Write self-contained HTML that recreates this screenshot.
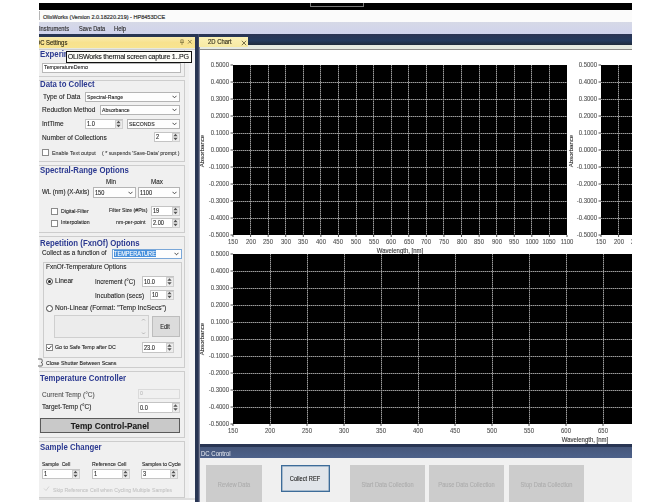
<!DOCTYPE html><html><head><meta charset="utf-8"><style>
html,body{margin:0;padding:0;background:#fff;width:671px;height:503px;overflow:hidden;position:relative;font-family:"Liberation Sans",sans-serif;}
#w div{position:absolute;box-sizing:content-box;}
.t{white-space:pre;-webkit-text-stroke-width:0.1px;}
</style></head><body><div id="w" style="position:absolute;left:0;top:0;width:671px;height:503px;overflow:hidden;filter:blur(0.3px)">
<div style="left:39px;top:3px;width:593px;height:7px;background:#000"></div>
<div style="left:310px;top:3px;width:52px;height:3px;border:1px solid #7a7a7a;border-top:none;"></div>
<div style="left:39px;top:10px;width:593px;height:12px;background:#fbfbfb"></div>
<div style="left:39px;top:11px;width:1px;height:9px;background:#b5b5b5"></div>
<div class="t" style="left:42.8px;top:12.98px;font-size:6.19px;line-height:7.43px;color:#333;font-weight:normal;transform:scaleX(0.8929);transform-origin:0 50%;-webkit-text-stroke:0.2px #333">OlisWorks (Version 2.0.18220.219) - HP8453DCE</div>
<div style="left:39px;top:22px;width:593px;height:12px;background:linear-gradient(#d6d9e6,#d0d3ec)"></div>
<div class="t" style="left:39.3px;top:24.74px;font-size:6.44px;line-height:7.73px;color:#2e2e2e;font-weight:normal;transform:scaleX(0.8929);transform-origin:0 50%;-webkit-text-stroke:0.15px #2e2e2e">Instruments</div>
<div class="t" style="left:79px;top:24.84px;font-size:6.27px;line-height:7.53px;color:#2e2e2e;font-weight:normal;transform:scaleX(0.8929);transform-origin:0 50%;-webkit-text-stroke:0.15px #2e2e2e">Save Data</div>
<div class="t" style="left:113.5px;top:24.70px;font-size:6.50px;line-height:7.80px;color:#2e2e2e;font-weight:normal;transform:scaleX(0.8929);transform-origin:0 50%;-webkit-text-stroke:0.15px #2e2e2e">Help</div>
<div style="left:39px;top:34px;width:593px;height:469px;background:#283553"></div>
<div style="left:199px;top:34px;width:433px;height:11px;background:linear-gradient(#2b3453,#243a5e 60%,#1f2b3c)"></div>
<div style="left:39px;top:37px;width:156px;height:11px;background:linear-gradient(#f9ebb0,#f8e28e 50%,#f8e48f)"></div>
<div style="left:39px;top:37px;width:130px;height:11px;overflow:hidden"><div class="t" style="position:absolute;left:-3.3px;top:2.1px;font-size:6.6px;line-height:8px;color:#2e2a18;-webkit-text-stroke:0.15px #2e2a18;transform:scaleX(0.89);transform-origin:0 50%">DC Settings</div></div>
<svg style="position:absolute;left:179px;top:39px" width="6" height="7"><path d="M1.8 0.8 H4.2 V3.3 H1.8 Z M1 3.5 H5 M3 3.5 V6" fill="none" stroke="#8c8048" stroke-width="0.8"/></svg>
<svg style="position:absolute;left:187px;top:39.2px" width="6" height="6"><path d="M1 1 L4.6 4.6 M4.6 1 L1 4.6" fill="none" stroke="#8c8048" stroke-width="0.9"/></svg>
<div style="left:39px;top:48px;width:156px;height:1px;background:#e6e8e0"></div>
<div style="left:39px;top:49px;width:156px;height:1px;background:#cfcfcf"></div>
<div style="left:39px;top:50px;width:156px;height:450px;background:#f0f0f0"></div>
<div style="left:189px;top:50px;width:6px;height:450px;background:#f5f5f7"></div>
<div style="left:39px;top:500px;width:156px;height:3px;background:#fff"></div>
<div style="left:198px;top:34px;width:1px;height:469px;background:#3f4866"></div>
<div style="left:199px;top:45px;width:1px;height:458px;background:#7d8399"></div>
<div style="left:200px;top:45px;width:432px;height:4px;background:#e6eae2"></div>
<div style="left:199px;top:37px;width:49px;height:10px;background:linear-gradient(#fbf1b8,#f6e9a2)"></div>
<div class="t" style="left:208px;top:38.44px;font-size:6.61px;line-height:7.93px;color:#2e2a18;font-weight:normal;transform:scaleX(0.8929);transform-origin:0 50%;-webkit-text-stroke:0.15px #3a3520">2D Chart</div>
<svg style="position:absolute;left:240.5px;top:39.8px" width="6" height="6"><path d="M0.8 0.8 L5.2 5.2 M5.2 0.8 L0.8 5.2" fill="none" stroke="#6b6440" stroke-width="0.9"/></svg>
<div style="left:200px;top:49px;width:432px;height:1px;background:#8c8c8a"></div>
<div style="left:200px;top:50px;width:432px;height:394px;background:#fff"></div>
<div style="left:200px;top:447px;width:432px;height:11px;background:linear-gradient(#46577a,#4d618a)"></div>
<div class="t" style="left:200.8px;top:450.17px;font-size:6.72px;line-height:8.06px;color:#eceef4;font-weight:normal;transform:scaleX(0.8929);transform-origin:0 50%;-webkit-text-stroke-width:0">DC Control</div>
<div style="left:200px;top:458px;width:432px;height:44px;background:#f0f0f0"></div>
<div style="left:195px;top:502px;width:437px;height:1px;background:#fff"></div>
<div style="left:632px;top:3px;width:39px;height:500px;background:#fff"></div>
<div class="t" style="left:128.8px;width:100px;text-align:right;top:60.68px;font-size:7.20px;line-height:8.64px;color:#505050;font-weight:normal;transform:scaleX(0.8333);transform-origin:100% 50%;">0.5000</div>
<div class="t" style="left:128.8px;width:100px;text-align:right;top:77.68px;font-size:7.20px;line-height:8.64px;color:#505050;font-weight:normal;transform:scaleX(0.8333);transform-origin:100% 50%;">0.4000</div>
<div class="t" style="left:128.8px;width:100px;text-align:right;top:94.68px;font-size:7.20px;line-height:8.64px;color:#505050;font-weight:normal;transform:scaleX(0.8333);transform-origin:100% 50%;">0.3000</div>
<div class="t" style="left:128.8px;width:100px;text-align:right;top:111.68px;font-size:7.20px;line-height:8.64px;color:#505050;font-weight:normal;transform:scaleX(0.8333);transform-origin:100% 50%;">0.2000</div>
<div class="t" style="left:128.8px;width:100px;text-align:right;top:128.68px;font-size:7.20px;line-height:8.64px;color:#505050;font-weight:normal;transform:scaleX(0.8333);transform-origin:100% 50%;">0.1000</div>
<div class="t" style="left:128.8px;width:100px;text-align:right;top:145.68px;font-size:7.20px;line-height:8.64px;color:#505050;font-weight:normal;transform:scaleX(0.8333);transform-origin:100% 50%;">0.0000</div>
<div class="t" style="left:128.8px;width:100px;text-align:right;top:162.68px;font-size:7.20px;line-height:8.64px;color:#505050;font-weight:normal;transform:scaleX(0.8333);transform-origin:100% 50%;">-0.1000</div>
<div class="t" style="left:128.8px;width:100px;text-align:right;top:179.68px;font-size:7.20px;line-height:8.64px;color:#505050;font-weight:normal;transform:scaleX(0.8333);transform-origin:100% 50%;">-0.2000</div>
<div class="t" style="left:128.8px;width:100px;text-align:right;top:196.68px;font-size:7.20px;line-height:8.64px;color:#505050;font-weight:normal;transform:scaleX(0.8333);transform-origin:100% 50%;">-0.3000</div>
<div class="t" style="left:128.8px;width:100px;text-align:right;top:213.68px;font-size:7.20px;line-height:8.64px;color:#505050;font-weight:normal;transform:scaleX(0.8333);transform-origin:100% 50%;">-0.4000</div>
<div class="t" style="left:128.8px;width:100px;text-align:right;top:230.68px;font-size:7.20px;line-height:8.64px;color:#505050;font-weight:normal;transform:scaleX(0.8333);transform-origin:100% 50%;">-0.5000</div>
<div class="t" style="left:218.0px;width:30px;text-align:center;top:237.75px;font-size:7.08px;line-height:8.50px;color:#505050;font-weight:normal;transform:scaleX(0.8333);transform-origin:50% 50%;">150</div>
<div class="t" style="left:235.57894736842104px;width:30px;text-align:center;top:237.75px;font-size:7.08px;line-height:8.50px;color:#505050;font-weight:normal;transform:scaleX(0.8333);transform-origin:50% 50%;">200</div>
<div class="t" style="left:253.15789473684208px;width:30px;text-align:center;top:237.75px;font-size:7.08px;line-height:8.50px;color:#505050;font-weight:normal;transform:scaleX(0.8333);transform-origin:50% 50%;">250</div>
<div class="t" style="left:270.7368421052631px;width:30px;text-align:center;top:237.75px;font-size:7.08px;line-height:8.50px;color:#505050;font-weight:normal;transform:scaleX(0.8333);transform-origin:50% 50%;">300</div>
<div class="t" style="left:288.3157894736842px;width:30px;text-align:center;top:237.75px;font-size:7.08px;line-height:8.50px;color:#505050;font-weight:normal;transform:scaleX(0.8333);transform-origin:50% 50%;">350</div>
<div class="t" style="left:305.89473684210526px;width:30px;text-align:center;top:237.75px;font-size:7.08px;line-height:8.50px;color:#505050;font-weight:normal;transform:scaleX(0.8333);transform-origin:50% 50%;">400</div>
<div class="t" style="left:323.4736842105263px;width:30px;text-align:center;top:237.75px;font-size:7.08px;line-height:8.50px;color:#505050;font-weight:normal;transform:scaleX(0.8333);transform-origin:50% 50%;">450</div>
<div class="t" style="left:341.05263157894734px;width:30px;text-align:center;top:237.75px;font-size:7.08px;line-height:8.50px;color:#505050;font-weight:normal;transform:scaleX(0.8333);transform-origin:50% 50%;">500</div>
<div class="t" style="left:358.63157894736844px;width:30px;text-align:center;top:237.75px;font-size:7.08px;line-height:8.50px;color:#505050;font-weight:normal;transform:scaleX(0.8333);transform-origin:50% 50%;">550</div>
<div class="t" style="left:376.2105263157895px;width:30px;text-align:center;top:237.75px;font-size:7.08px;line-height:8.50px;color:#505050;font-weight:normal;transform:scaleX(0.8333);transform-origin:50% 50%;">600</div>
<div class="t" style="left:393.7894736842105px;width:30px;text-align:center;top:237.75px;font-size:7.08px;line-height:8.50px;color:#505050;font-weight:normal;transform:scaleX(0.8333);transform-origin:50% 50%;">650</div>
<div class="t" style="left:411.36842105263156px;width:30px;text-align:center;top:237.75px;font-size:7.08px;line-height:8.50px;color:#505050;font-weight:normal;transform:scaleX(0.8333);transform-origin:50% 50%;">700</div>
<div class="t" style="left:428.9473684210526px;width:30px;text-align:center;top:237.75px;font-size:7.08px;line-height:8.50px;color:#505050;font-weight:normal;transform:scaleX(0.8333);transform-origin:50% 50%;">750</div>
<div class="t" style="left:446.52631578947364px;width:30px;text-align:center;top:237.75px;font-size:7.08px;line-height:8.50px;color:#505050;font-weight:normal;transform:scaleX(0.8333);transform-origin:50% 50%;">800</div>
<div class="t" style="left:464.1052631578947px;width:30px;text-align:center;top:237.75px;font-size:7.08px;line-height:8.50px;color:#505050;font-weight:normal;transform:scaleX(0.8333);transform-origin:50% 50%;">850</div>
<div class="t" style="left:481.6842105263158px;width:30px;text-align:center;top:237.75px;font-size:7.08px;line-height:8.50px;color:#505050;font-weight:normal;transform:scaleX(0.8333);transform-origin:50% 50%;">900</div>
<div class="t" style="left:499.2631578947369px;width:30px;text-align:center;top:237.75px;font-size:7.08px;line-height:8.50px;color:#505050;font-weight:normal;transform:scaleX(0.8333);transform-origin:50% 50%;">950</div>
<div class="t" style="left:516.8421052631579px;width:30px;text-align:center;top:237.75px;font-size:7.08px;line-height:8.50px;color:#505050;font-weight:normal;transform:scaleX(0.8333);transform-origin:50% 50%;">1000</div>
<div class="t" style="left:534.421052631579px;width:30px;text-align:center;top:237.75px;font-size:7.08px;line-height:8.50px;color:#505050;font-weight:normal;transform:scaleX(0.8333);transform-origin:50% 50%;">1050</div>
<div class="t" style="left:552.0px;width:30px;text-align:center;top:237.75px;font-size:7.08px;line-height:8.50px;color:#505050;font-weight:normal;transform:scaleX(0.8333);transform-origin:50% 50%;">1100</div>
<div class="t" style="left:360.0px;width:80px;text-align:center;top:247.27px;font-size:6.72px;line-height:8.06px;color:#333;font-weight:normal;transform:scaleX(0.8929);transform-origin:50% 50%;">Wavelength, [nm]</div>
<div class="t" style="left:496.79999999999995px;width:100px;text-align:right;top:60.68px;font-size:7.20px;line-height:8.64px;color:#505050;font-weight:normal;transform:scaleX(0.8333);transform-origin:100% 50%;">0.5000</div>
<div class="t" style="left:496.79999999999995px;width:100px;text-align:right;top:77.68px;font-size:7.20px;line-height:8.64px;color:#505050;font-weight:normal;transform:scaleX(0.8333);transform-origin:100% 50%;">0.4000</div>
<div class="t" style="left:496.79999999999995px;width:100px;text-align:right;top:94.68px;font-size:7.20px;line-height:8.64px;color:#505050;font-weight:normal;transform:scaleX(0.8333);transform-origin:100% 50%;">0.3000</div>
<div class="t" style="left:496.79999999999995px;width:100px;text-align:right;top:111.68px;font-size:7.20px;line-height:8.64px;color:#505050;font-weight:normal;transform:scaleX(0.8333);transform-origin:100% 50%;">0.2000</div>
<div class="t" style="left:496.79999999999995px;width:100px;text-align:right;top:128.68px;font-size:7.20px;line-height:8.64px;color:#505050;font-weight:normal;transform:scaleX(0.8333);transform-origin:100% 50%;">0.1000</div>
<div class="t" style="left:496.79999999999995px;width:100px;text-align:right;top:145.68px;font-size:7.20px;line-height:8.64px;color:#505050;font-weight:normal;transform:scaleX(0.8333);transform-origin:100% 50%;">0.0000</div>
<div class="t" style="left:496.79999999999995px;width:100px;text-align:right;top:162.68px;font-size:7.20px;line-height:8.64px;color:#505050;font-weight:normal;transform:scaleX(0.8333);transform-origin:100% 50%;">-0.1000</div>
<div class="t" style="left:496.79999999999995px;width:100px;text-align:right;top:179.68px;font-size:7.20px;line-height:8.64px;color:#505050;font-weight:normal;transform:scaleX(0.8333);transform-origin:100% 50%;">-0.2000</div>
<div class="t" style="left:496.79999999999995px;width:100px;text-align:right;top:196.68px;font-size:7.20px;line-height:8.64px;color:#505050;font-weight:normal;transform:scaleX(0.8333);transform-origin:100% 50%;">-0.3000</div>
<div class="t" style="left:496.79999999999995px;width:100px;text-align:right;top:213.68px;font-size:7.20px;line-height:8.64px;color:#505050;font-weight:normal;transform:scaleX(0.8333);transform-origin:100% 50%;">-0.4000</div>
<div class="t" style="left:496.79999999999995px;width:100px;text-align:right;top:230.68px;font-size:7.20px;line-height:8.64px;color:#505050;font-weight:normal;transform:scaleX(0.8333);transform-origin:100% 50%;">-0.5000</div>
<div class="t" style="left:586.0px;width:30px;text-align:center;top:237.75px;font-size:7.08px;line-height:8.50px;color:#505050;font-weight:normal;transform:scaleX(0.8333);transform-origin:50% 50%;">150</div>
<div class="t" style="left:603.578947368421px;width:30px;text-align:center;top:237.75px;font-size:7.08px;line-height:8.50px;color:#505050;font-weight:normal;transform:scaleX(0.8333);transform-origin:50% 50%;">200</div>
<div class="t" style="left:621.1578947368421px;width:30px;text-align:center;top:237.75px;font-size:7.08px;line-height:8.50px;color:#505050;font-weight:normal;transform:scaleX(0.8333);transform-origin:50% 50%;">250</div>
<div class="t" style="left:128.8px;width:100px;text-align:right;top:249.68px;font-size:7.20px;line-height:8.64px;color:#505050;font-weight:normal;transform:scaleX(0.8333);transform-origin:100% 50%;">0.5000</div>
<div class="t" style="left:128.8px;width:100px;text-align:right;top:266.68px;font-size:7.20px;line-height:8.64px;color:#505050;font-weight:normal;transform:scaleX(0.8333);transform-origin:100% 50%;">0.4000</div>
<div class="t" style="left:128.8px;width:100px;text-align:right;top:283.68px;font-size:7.20px;line-height:8.64px;color:#505050;font-weight:normal;transform:scaleX(0.8333);transform-origin:100% 50%;">0.3000</div>
<div class="t" style="left:128.8px;width:100px;text-align:right;top:300.68px;font-size:7.20px;line-height:8.64px;color:#505050;font-weight:normal;transform:scaleX(0.8333);transform-origin:100% 50%;">0.2000</div>
<div class="t" style="left:128.8px;width:100px;text-align:right;top:317.68px;font-size:7.20px;line-height:8.64px;color:#505050;font-weight:normal;transform:scaleX(0.8333);transform-origin:100% 50%;">0.1000</div>
<div class="t" style="left:128.8px;width:100px;text-align:right;top:334.68px;font-size:7.20px;line-height:8.64px;color:#505050;font-weight:normal;transform:scaleX(0.8333);transform-origin:100% 50%;">0.0000</div>
<div class="t" style="left:128.8px;width:100px;text-align:right;top:351.68px;font-size:7.20px;line-height:8.64px;color:#505050;font-weight:normal;transform:scaleX(0.8333);transform-origin:100% 50%;">-0.1000</div>
<div class="t" style="left:128.8px;width:100px;text-align:right;top:368.68px;font-size:7.20px;line-height:8.64px;color:#505050;font-weight:normal;transform:scaleX(0.8333);transform-origin:100% 50%;">-0.2000</div>
<div class="t" style="left:128.8px;width:100px;text-align:right;top:385.68px;font-size:7.20px;line-height:8.64px;color:#505050;font-weight:normal;transform:scaleX(0.8333);transform-origin:100% 50%;">-0.3000</div>
<div class="t" style="left:128.8px;width:100px;text-align:right;top:402.68px;font-size:7.20px;line-height:8.64px;color:#505050;font-weight:normal;transform:scaleX(0.8333);transform-origin:100% 50%;">-0.4000</div>
<div class="t" style="left:128.8px;width:100px;text-align:right;top:419.68px;font-size:7.20px;line-height:8.64px;color:#505050;font-weight:normal;transform:scaleX(0.8333);transform-origin:100% 50%;">-0.5000</div>
<div class="t" style="left:218.0px;width:30px;text-align:center;top:426.75px;font-size:7.08px;line-height:8.50px;color:#505050;font-weight:normal;transform:scaleX(0.8333);transform-origin:50% 50%;">150</div>
<div class="t" style="left:255.0px;width:30px;text-align:center;top:426.75px;font-size:7.08px;line-height:8.50px;color:#505050;font-weight:normal;transform:scaleX(0.8333);transform-origin:50% 50%;">200</div>
<div class="t" style="left:292.0px;width:30px;text-align:center;top:426.75px;font-size:7.08px;line-height:8.50px;color:#505050;font-weight:normal;transform:scaleX(0.8333);transform-origin:50% 50%;">250</div>
<div class="t" style="left:329.0px;width:30px;text-align:center;top:426.75px;font-size:7.08px;line-height:8.50px;color:#505050;font-weight:normal;transform:scaleX(0.8333);transform-origin:50% 50%;">300</div>
<div class="t" style="left:366.0px;width:30px;text-align:center;top:426.75px;font-size:7.08px;line-height:8.50px;color:#505050;font-weight:normal;transform:scaleX(0.8333);transform-origin:50% 50%;">350</div>
<div class="t" style="left:403.0px;width:30px;text-align:center;top:426.75px;font-size:7.08px;line-height:8.50px;color:#505050;font-weight:normal;transform:scaleX(0.8333);transform-origin:50% 50%;">400</div>
<div class="t" style="left:440.0px;width:30px;text-align:center;top:426.75px;font-size:7.08px;line-height:8.50px;color:#505050;font-weight:normal;transform:scaleX(0.8333);transform-origin:50% 50%;">450</div>
<div class="t" style="left:477.0px;width:30px;text-align:center;top:426.75px;font-size:7.08px;line-height:8.50px;color:#505050;font-weight:normal;transform:scaleX(0.8333);transform-origin:50% 50%;">500</div>
<div class="t" style="left:514.0px;width:30px;text-align:center;top:426.75px;font-size:7.08px;line-height:8.50px;color:#505050;font-weight:normal;transform:scaleX(0.8333);transform-origin:50% 50%;">550</div>
<div class="t" style="left:551.0px;width:30px;text-align:center;top:426.75px;font-size:7.08px;line-height:8.50px;color:#505050;font-weight:normal;transform:scaleX(0.8333);transform-origin:50% 50%;">600</div>
<div class="t" style="left:588.0px;width:30px;text-align:center;top:426.75px;font-size:7.08px;line-height:8.50px;color:#505050;font-weight:normal;transform:scaleX(0.8333);transform-origin:50% 50%;">650</div>
<div class="t" style="left:625.0px;width:30px;text-align:center;top:426.75px;font-size:7.08px;line-height:8.50px;color:#505050;font-weight:normal;transform:scaleX(0.8333);transform-origin:50% 50%;">700</div>
<div class="t" style="left:544.6px;width:80px;text-align:center;top:435.77px;font-size:6.72px;line-height:8.06px;color:#333;font-weight:normal;transform:scaleX(0.8929);transform-origin:50% 50%;">Wavelength, [nm]</div>
<svg style="position:absolute;left:0;top:0" width="671" height="503"><defs><clipPath id="c"><rect x="199" y="50" width="433" height="394"/></clipPath></defs><g clip-path="url(#c)"><rect x="233" y="65" width="334" height="170" fill="#000"/><line x1="250.50" y1="65" x2="250.50" y2="235" stroke="#9c9c9c" stroke-width="1" stroke-dasharray="1.5 0.5"/><line x1="268.50" y1="65" x2="268.50" y2="235" stroke="#9c9c9c" stroke-width="1" stroke-dasharray="1.5 0.5"/><line x1="285.50" y1="65" x2="285.50" y2="235" stroke="#9c9c9c" stroke-width="1" stroke-dasharray="1.5 0.5"/><line x1="303.50" y1="65" x2="303.50" y2="235" stroke="#9c9c9c" stroke-width="1" stroke-dasharray="1.5 0.5"/><line x1="320.50" y1="65" x2="320.50" y2="235" stroke="#9c9c9c" stroke-width="1" stroke-dasharray="1.5 0.5"/><line x1="338.50" y1="65" x2="338.50" y2="235" stroke="#9c9c9c" stroke-width="1" stroke-dasharray="1.5 0.5"/><line x1="356.50" y1="65" x2="356.50" y2="235" stroke="#9c9c9c" stroke-width="1" stroke-dasharray="1.5 0.5"/><line x1="373.50" y1="65" x2="373.50" y2="235" stroke="#9c9c9c" stroke-width="1" stroke-dasharray="1.5 0.5"/><line x1="391.50" y1="65" x2="391.50" y2="235" stroke="#9c9c9c" stroke-width="1" stroke-dasharray="1.5 0.5"/><line x1="408.50" y1="65" x2="408.50" y2="235" stroke="#9c9c9c" stroke-width="1" stroke-dasharray="1.5 0.5"/><line x1="426.50" y1="65" x2="426.50" y2="235" stroke="#9c9c9c" stroke-width="1" stroke-dasharray="1.5 0.5"/><line x1="443.50" y1="65" x2="443.50" y2="235" stroke="#9c9c9c" stroke-width="1" stroke-dasharray="1.5 0.5"/><line x1="461.50" y1="65" x2="461.50" y2="235" stroke="#9c9c9c" stroke-width="1" stroke-dasharray="1.5 0.5"/><line x1="479.50" y1="65" x2="479.50" y2="235" stroke="#9c9c9c" stroke-width="1" stroke-dasharray="1.5 0.5"/><line x1="496.50" y1="65" x2="496.50" y2="235" stroke="#9c9c9c" stroke-width="1" stroke-dasharray="1.5 0.5"/><line x1="514.50" y1="65" x2="514.50" y2="235" stroke="#9c9c9c" stroke-width="1" stroke-dasharray="1.5 0.5"/><line x1="531.50" y1="65" x2="531.50" y2="235" stroke="#9c9c9c" stroke-width="1" stroke-dasharray="1.5 0.5"/><line x1="549.50" y1="65" x2="549.50" y2="235" stroke="#9c9c9c" stroke-width="1" stroke-dasharray="1.5 0.5"/><line x1="233" y1="82.50" x2="567" y2="82.50" stroke="#9c9c9c" stroke-width="1" stroke-dasharray="1.5 0.5"/><line x1="233" y1="99.50" x2="567" y2="99.50" stroke="#9c9c9c" stroke-width="1" stroke-dasharray="1.5 0.5"/><line x1="233" y1="116.50" x2="567" y2="116.50" stroke="#9c9c9c" stroke-width="1" stroke-dasharray="1.5 0.5"/><line x1="233" y1="133.50" x2="567" y2="133.50" stroke="#9c9c9c" stroke-width="1" stroke-dasharray="1.5 0.5"/><line x1="233" y1="150.50" x2="567" y2="150.50" stroke="#9c9c9c" stroke-width="1" stroke-dasharray="1.5 0.5"/><line x1="233" y1="167.50" x2="567" y2="167.50" stroke="#9c9c9c" stroke-width="1" stroke-dasharray="1.5 0.5"/><line x1="233" y1="184.50" x2="567" y2="184.50" stroke="#9c9c9c" stroke-width="1" stroke-dasharray="1.5 0.5"/><line x1="233" y1="201.50" x2="567" y2="201.50" stroke="#9c9c9c" stroke-width="1" stroke-dasharray="1.5 0.5"/><line x1="233" y1="218.50" x2="567" y2="218.50" stroke="#9c9c9c" stroke-width="1" stroke-dasharray="1.5 0.5"/><line x1="230.5" y1="65.00" x2="233" y2="65.00" stroke="#3a3a3a" stroke-width="0.9"/><line x1="230.5" y1="82.00" x2="233" y2="82.00" stroke="#3a3a3a" stroke-width="0.9"/><line x1="230.5" y1="99.00" x2="233" y2="99.00" stroke="#3a3a3a" stroke-width="0.9"/><line x1="230.5" y1="116.00" x2="233" y2="116.00" stroke="#3a3a3a" stroke-width="0.9"/><line x1="230.5" y1="133.00" x2="233" y2="133.00" stroke="#3a3a3a" stroke-width="0.9"/><line x1="230.5" y1="150.00" x2="233" y2="150.00" stroke="#3a3a3a" stroke-width="0.9"/><line x1="230.5" y1="167.00" x2="233" y2="167.00" stroke="#3a3a3a" stroke-width="0.9"/><line x1="230.5" y1="184.00" x2="233" y2="184.00" stroke="#3a3a3a" stroke-width="0.9"/><line x1="230.5" y1="201.00" x2="233" y2="201.00" stroke="#3a3a3a" stroke-width="0.9"/><line x1="230.5" y1="218.00" x2="233" y2="218.00" stroke="#3a3a3a" stroke-width="0.9"/><line x1="230.5" y1="235.00" x2="233" y2="235.00" stroke="#3a3a3a" stroke-width="0.9"/><line x1="233.00" y1="235" x2="233.00" y2="237" stroke="#3a3a3a" stroke-width="0.9"/><line x1="250.58" y1="235" x2="250.58" y2="237" stroke="#3a3a3a" stroke-width="0.9"/><line x1="268.16" y1="235" x2="268.16" y2="237" stroke="#3a3a3a" stroke-width="0.9"/><line x1="285.74" y1="235" x2="285.74" y2="237" stroke="#3a3a3a" stroke-width="0.9"/><line x1="303.32" y1="235" x2="303.32" y2="237" stroke="#3a3a3a" stroke-width="0.9"/><line x1="320.89" y1="235" x2="320.89" y2="237" stroke="#3a3a3a" stroke-width="0.9"/><line x1="338.47" y1="235" x2="338.47" y2="237" stroke="#3a3a3a" stroke-width="0.9"/><line x1="356.05" y1="235" x2="356.05" y2="237" stroke="#3a3a3a" stroke-width="0.9"/><line x1="373.63" y1="235" x2="373.63" y2="237" stroke="#3a3a3a" stroke-width="0.9"/><line x1="391.21" y1="235" x2="391.21" y2="237" stroke="#3a3a3a" stroke-width="0.9"/><line x1="408.79" y1="235" x2="408.79" y2="237" stroke="#3a3a3a" stroke-width="0.9"/><line x1="426.37" y1="235" x2="426.37" y2="237" stroke="#3a3a3a" stroke-width="0.9"/><line x1="443.95" y1="235" x2="443.95" y2="237" stroke="#3a3a3a" stroke-width="0.9"/><line x1="461.53" y1="235" x2="461.53" y2="237" stroke="#3a3a3a" stroke-width="0.9"/><line x1="479.11" y1="235" x2="479.11" y2="237" stroke="#3a3a3a" stroke-width="0.9"/><line x1="496.68" y1="235" x2="496.68" y2="237" stroke="#3a3a3a" stroke-width="0.9"/><line x1="514.26" y1="235" x2="514.26" y2="237" stroke="#3a3a3a" stroke-width="0.9"/><line x1="531.84" y1="235" x2="531.84" y2="237" stroke="#3a3a3a" stroke-width="0.9"/><line x1="549.42" y1="235" x2="549.42" y2="237" stroke="#3a3a3a" stroke-width="0.9"/><line x1="567.00" y1="235" x2="567.00" y2="237" stroke="#3a3a3a" stroke-width="0.9"/><rect x="601" y="65" width="334" height="170" fill="#000"/><line x1="618.50" y1="65" x2="618.50" y2="235" stroke="#9c9c9c" stroke-width="1" stroke-dasharray="1.5 0.5"/><line x1="636.50" y1="65" x2="636.50" y2="235" stroke="#9c9c9c" stroke-width="1" stroke-dasharray="1.5 0.5"/><line x1="653.50" y1="65" x2="653.50" y2="235" stroke="#9c9c9c" stroke-width="1" stroke-dasharray="1.5 0.5"/><line x1="671.50" y1="65" x2="671.50" y2="235" stroke="#9c9c9c" stroke-width="1" stroke-dasharray="1.5 0.5"/><line x1="688.50" y1="65" x2="688.50" y2="235" stroke="#9c9c9c" stroke-width="1" stroke-dasharray="1.5 0.5"/><line x1="706.50" y1="65" x2="706.50" y2="235" stroke="#9c9c9c" stroke-width="1" stroke-dasharray="1.5 0.5"/><line x1="724.50" y1="65" x2="724.50" y2="235" stroke="#9c9c9c" stroke-width="1" stroke-dasharray="1.5 0.5"/><line x1="741.50" y1="65" x2="741.50" y2="235" stroke="#9c9c9c" stroke-width="1" stroke-dasharray="1.5 0.5"/><line x1="759.50" y1="65" x2="759.50" y2="235" stroke="#9c9c9c" stroke-width="1" stroke-dasharray="1.5 0.5"/><line x1="776.50" y1="65" x2="776.50" y2="235" stroke="#9c9c9c" stroke-width="1" stroke-dasharray="1.5 0.5"/><line x1="794.50" y1="65" x2="794.50" y2="235" stroke="#9c9c9c" stroke-width="1" stroke-dasharray="1.5 0.5"/><line x1="811.50" y1="65" x2="811.50" y2="235" stroke="#9c9c9c" stroke-width="1" stroke-dasharray="1.5 0.5"/><line x1="829.50" y1="65" x2="829.50" y2="235" stroke="#9c9c9c" stroke-width="1" stroke-dasharray="1.5 0.5"/><line x1="847.50" y1="65" x2="847.50" y2="235" stroke="#9c9c9c" stroke-width="1" stroke-dasharray="1.5 0.5"/><line x1="864.50" y1="65" x2="864.50" y2="235" stroke="#9c9c9c" stroke-width="1" stroke-dasharray="1.5 0.5"/><line x1="882.50" y1="65" x2="882.50" y2="235" stroke="#9c9c9c" stroke-width="1" stroke-dasharray="1.5 0.5"/><line x1="899.50" y1="65" x2="899.50" y2="235" stroke="#9c9c9c" stroke-width="1" stroke-dasharray="1.5 0.5"/><line x1="917.50" y1="65" x2="917.50" y2="235" stroke="#9c9c9c" stroke-width="1" stroke-dasharray="1.5 0.5"/><line x1="601" y1="82.50" x2="935" y2="82.50" stroke="#9c9c9c" stroke-width="1" stroke-dasharray="1.5 0.5"/><line x1="601" y1="99.50" x2="935" y2="99.50" stroke="#9c9c9c" stroke-width="1" stroke-dasharray="1.5 0.5"/><line x1="601" y1="116.50" x2="935" y2="116.50" stroke="#9c9c9c" stroke-width="1" stroke-dasharray="1.5 0.5"/><line x1="601" y1="133.50" x2="935" y2="133.50" stroke="#9c9c9c" stroke-width="1" stroke-dasharray="1.5 0.5"/><line x1="601" y1="150.50" x2="935" y2="150.50" stroke="#9c9c9c" stroke-width="1" stroke-dasharray="1.5 0.5"/><line x1="601" y1="167.50" x2="935" y2="167.50" stroke="#9c9c9c" stroke-width="1" stroke-dasharray="1.5 0.5"/><line x1="601" y1="184.50" x2="935" y2="184.50" stroke="#9c9c9c" stroke-width="1" stroke-dasharray="1.5 0.5"/><line x1="601" y1="201.50" x2="935" y2="201.50" stroke="#9c9c9c" stroke-width="1" stroke-dasharray="1.5 0.5"/><line x1="601" y1="218.50" x2="935" y2="218.50" stroke="#9c9c9c" stroke-width="1" stroke-dasharray="1.5 0.5"/><line x1="598.5" y1="65.00" x2="601" y2="65.00" stroke="#3a3a3a" stroke-width="0.9"/><line x1="598.5" y1="82.00" x2="601" y2="82.00" stroke="#3a3a3a" stroke-width="0.9"/><line x1="598.5" y1="99.00" x2="601" y2="99.00" stroke="#3a3a3a" stroke-width="0.9"/><line x1="598.5" y1="116.00" x2="601" y2="116.00" stroke="#3a3a3a" stroke-width="0.9"/><line x1="598.5" y1="133.00" x2="601" y2="133.00" stroke="#3a3a3a" stroke-width="0.9"/><line x1="598.5" y1="150.00" x2="601" y2="150.00" stroke="#3a3a3a" stroke-width="0.9"/><line x1="598.5" y1="167.00" x2="601" y2="167.00" stroke="#3a3a3a" stroke-width="0.9"/><line x1="598.5" y1="184.00" x2="601" y2="184.00" stroke="#3a3a3a" stroke-width="0.9"/><line x1="598.5" y1="201.00" x2="601" y2="201.00" stroke="#3a3a3a" stroke-width="0.9"/><line x1="598.5" y1="218.00" x2="601" y2="218.00" stroke="#3a3a3a" stroke-width="0.9"/><line x1="598.5" y1="235.00" x2="601" y2="235.00" stroke="#3a3a3a" stroke-width="0.9"/><line x1="601.00" y1="235" x2="601.00" y2="237" stroke="#3a3a3a" stroke-width="0.9"/><line x1="618.58" y1="235" x2="618.58" y2="237" stroke="#3a3a3a" stroke-width="0.9"/><line x1="636.16" y1="235" x2="636.16" y2="237" stroke="#3a3a3a" stroke-width="0.9"/><line x1="653.74" y1="235" x2="653.74" y2="237" stroke="#3a3a3a" stroke-width="0.9"/><line x1="671.32" y1="235" x2="671.32" y2="237" stroke="#3a3a3a" stroke-width="0.9"/><line x1="688.89" y1="235" x2="688.89" y2="237" stroke="#3a3a3a" stroke-width="0.9"/><line x1="706.47" y1="235" x2="706.47" y2="237" stroke="#3a3a3a" stroke-width="0.9"/><line x1="724.05" y1="235" x2="724.05" y2="237" stroke="#3a3a3a" stroke-width="0.9"/><line x1="741.63" y1="235" x2="741.63" y2="237" stroke="#3a3a3a" stroke-width="0.9"/><line x1="759.21" y1="235" x2="759.21" y2="237" stroke="#3a3a3a" stroke-width="0.9"/><line x1="776.79" y1="235" x2="776.79" y2="237" stroke="#3a3a3a" stroke-width="0.9"/><line x1="794.37" y1="235" x2="794.37" y2="237" stroke="#3a3a3a" stroke-width="0.9"/><line x1="811.95" y1="235" x2="811.95" y2="237" stroke="#3a3a3a" stroke-width="0.9"/><line x1="829.53" y1="235" x2="829.53" y2="237" stroke="#3a3a3a" stroke-width="0.9"/><line x1="847.11" y1="235" x2="847.11" y2="237" stroke="#3a3a3a" stroke-width="0.9"/><line x1="864.68" y1="235" x2="864.68" y2="237" stroke="#3a3a3a" stroke-width="0.9"/><line x1="882.26" y1="235" x2="882.26" y2="237" stroke="#3a3a3a" stroke-width="0.9"/><line x1="899.84" y1="235" x2="899.84" y2="237" stroke="#3a3a3a" stroke-width="0.9"/><line x1="917.42" y1="235" x2="917.42" y2="237" stroke="#3a3a3a" stroke-width="0.9"/><line x1="935.00" y1="235" x2="935.00" y2="237" stroke="#3a3a3a" stroke-width="0.9"/><rect x="233" y="254" width="703" height="170" fill="#000"/><line x1="270.50" y1="254" x2="270.50" y2="424" stroke="#9c9c9c" stroke-width="1" stroke-dasharray="1.5 0.5"/><line x1="307.50" y1="254" x2="307.50" y2="424" stroke="#9c9c9c" stroke-width="1" stroke-dasharray="1.5 0.5"/><line x1="344.50" y1="254" x2="344.50" y2="424" stroke="#9c9c9c" stroke-width="1" stroke-dasharray="1.5 0.5"/><line x1="381.50" y1="254" x2="381.50" y2="424" stroke="#9c9c9c" stroke-width="1" stroke-dasharray="1.5 0.5"/><line x1="418.50" y1="254" x2="418.50" y2="424" stroke="#9c9c9c" stroke-width="1" stroke-dasharray="1.5 0.5"/><line x1="455.50" y1="254" x2="455.50" y2="424" stroke="#9c9c9c" stroke-width="1" stroke-dasharray="1.5 0.5"/><line x1="492.50" y1="254" x2="492.50" y2="424" stroke="#9c9c9c" stroke-width="1" stroke-dasharray="1.5 0.5"/><line x1="529.50" y1="254" x2="529.50" y2="424" stroke="#9c9c9c" stroke-width="1" stroke-dasharray="1.5 0.5"/><line x1="566.50" y1="254" x2="566.50" y2="424" stroke="#9c9c9c" stroke-width="1" stroke-dasharray="1.5 0.5"/><line x1="603.50" y1="254" x2="603.50" y2="424" stroke="#9c9c9c" stroke-width="1" stroke-dasharray="1.5 0.5"/><line x1="640.50" y1="254" x2="640.50" y2="424" stroke="#9c9c9c" stroke-width="1" stroke-dasharray="1.5 0.5"/><line x1="677.50" y1="254" x2="677.50" y2="424" stroke="#9c9c9c" stroke-width="1" stroke-dasharray="1.5 0.5"/><line x1="714.50" y1="254" x2="714.50" y2="424" stroke="#9c9c9c" stroke-width="1" stroke-dasharray="1.5 0.5"/><line x1="751.50" y1="254" x2="751.50" y2="424" stroke="#9c9c9c" stroke-width="1" stroke-dasharray="1.5 0.5"/><line x1="788.50" y1="254" x2="788.50" y2="424" stroke="#9c9c9c" stroke-width="1" stroke-dasharray="1.5 0.5"/><line x1="825.50" y1="254" x2="825.50" y2="424" stroke="#9c9c9c" stroke-width="1" stroke-dasharray="1.5 0.5"/><line x1="862.50" y1="254" x2="862.50" y2="424" stroke="#9c9c9c" stroke-width="1" stroke-dasharray="1.5 0.5"/><line x1="899.50" y1="254" x2="899.50" y2="424" stroke="#9c9c9c" stroke-width="1" stroke-dasharray="1.5 0.5"/><line x1="233" y1="271.50" x2="936" y2="271.50" stroke="#9c9c9c" stroke-width="1" stroke-dasharray="1.5 0.5"/><line x1="233" y1="288.50" x2="936" y2="288.50" stroke="#9c9c9c" stroke-width="1" stroke-dasharray="1.5 0.5"/><line x1="233" y1="305.50" x2="936" y2="305.50" stroke="#9c9c9c" stroke-width="1" stroke-dasharray="1.5 0.5"/><line x1="233" y1="322.50" x2="936" y2="322.50" stroke="#9c9c9c" stroke-width="1" stroke-dasharray="1.5 0.5"/><line x1="233" y1="339.50" x2="936" y2="339.50" stroke="#9c9c9c" stroke-width="1" stroke-dasharray="1.5 0.5"/><line x1="233" y1="356.50" x2="936" y2="356.50" stroke="#9c9c9c" stroke-width="1" stroke-dasharray="1.5 0.5"/><line x1="233" y1="373.50" x2="936" y2="373.50" stroke="#9c9c9c" stroke-width="1" stroke-dasharray="1.5 0.5"/><line x1="233" y1="390.50" x2="936" y2="390.50" stroke="#9c9c9c" stroke-width="1" stroke-dasharray="1.5 0.5"/><line x1="233" y1="407.50" x2="936" y2="407.50" stroke="#9c9c9c" stroke-width="1" stroke-dasharray="1.5 0.5"/><line x1="230.5" y1="254.00" x2="233" y2="254.00" stroke="#3a3a3a" stroke-width="0.9"/><line x1="230.5" y1="271.00" x2="233" y2="271.00" stroke="#3a3a3a" stroke-width="0.9"/><line x1="230.5" y1="288.00" x2="233" y2="288.00" stroke="#3a3a3a" stroke-width="0.9"/><line x1="230.5" y1="305.00" x2="233" y2="305.00" stroke="#3a3a3a" stroke-width="0.9"/><line x1="230.5" y1="322.00" x2="233" y2="322.00" stroke="#3a3a3a" stroke-width="0.9"/><line x1="230.5" y1="339.00" x2="233" y2="339.00" stroke="#3a3a3a" stroke-width="0.9"/><line x1="230.5" y1="356.00" x2="233" y2="356.00" stroke="#3a3a3a" stroke-width="0.9"/><line x1="230.5" y1="373.00" x2="233" y2="373.00" stroke="#3a3a3a" stroke-width="0.9"/><line x1="230.5" y1="390.00" x2="233" y2="390.00" stroke="#3a3a3a" stroke-width="0.9"/><line x1="230.5" y1="407.00" x2="233" y2="407.00" stroke="#3a3a3a" stroke-width="0.9"/><line x1="230.5" y1="424.00" x2="233" y2="424.00" stroke="#3a3a3a" stroke-width="0.9"/><line x1="233.00" y1="424" x2="233.00" y2="426" stroke="#3a3a3a" stroke-width="0.9"/><line x1="270.00" y1="424" x2="270.00" y2="426" stroke="#3a3a3a" stroke-width="0.9"/><line x1="307.00" y1="424" x2="307.00" y2="426" stroke="#3a3a3a" stroke-width="0.9"/><line x1="344.00" y1="424" x2="344.00" y2="426" stroke="#3a3a3a" stroke-width="0.9"/><line x1="381.00" y1="424" x2="381.00" y2="426" stroke="#3a3a3a" stroke-width="0.9"/><line x1="418.00" y1="424" x2="418.00" y2="426" stroke="#3a3a3a" stroke-width="0.9"/><line x1="455.00" y1="424" x2="455.00" y2="426" stroke="#3a3a3a" stroke-width="0.9"/><line x1="492.00" y1="424" x2="492.00" y2="426" stroke="#3a3a3a" stroke-width="0.9"/><line x1="529.00" y1="424" x2="529.00" y2="426" stroke="#3a3a3a" stroke-width="0.9"/><line x1="566.00" y1="424" x2="566.00" y2="426" stroke="#3a3a3a" stroke-width="0.9"/><line x1="603.00" y1="424" x2="603.00" y2="426" stroke="#3a3a3a" stroke-width="0.9"/><line x1="640.00" y1="424" x2="640.00" y2="426" stroke="#3a3a3a" stroke-width="0.9"/><line x1="677.00" y1="424" x2="677.00" y2="426" stroke="#3a3a3a" stroke-width="0.9"/><line x1="714.00" y1="424" x2="714.00" y2="426" stroke="#3a3a3a" stroke-width="0.9"/><line x1="751.00" y1="424" x2="751.00" y2="426" stroke="#3a3a3a" stroke-width="0.9"/><line x1="788.00" y1="424" x2="788.00" y2="426" stroke="#3a3a3a" stroke-width="0.9"/><line x1="825.00" y1="424" x2="825.00" y2="426" stroke="#3a3a3a" stroke-width="0.9"/><line x1="862.00" y1="424" x2="862.00" y2="426" stroke="#3a3a3a" stroke-width="0.9"/><line x1="899.00" y1="424" x2="899.00" y2="426" stroke="#3a3a3a" stroke-width="0.9"/><line x1="936.00" y1="424" x2="936.00" y2="426" stroke="#3a3a3a" stroke-width="0.9"/></g></svg>
<div class="t" style="left:201.2px;top:150.6px;font-size:6.1px;line-height:7px;color:#333;transform:translate(-50%,-50%) rotate(-90deg);">Absorbance</div>
<div class="t" style="left:570.2px;top:150.6px;font-size:6.1px;line-height:7px;color:#333;transform:translate(-50%,-50%) rotate(-90deg);">Absorbance</div>
<div class="t" style="left:201.2px;top:339px;font-size:6.1px;line-height:7px;color:#333;transform:translate(-50%,-50%) rotate(-90deg);">Absorbance</div>
<div style="left:632px;top:3px;width:39px;height:500px;background:#fff"></div>
<div style="left:206px;top:465px;width:56px;height:37px;background:#cccccc;"></div>
<div class="t" style="left:206.0px;width:56px;text-align:center;top:480.67px;font-size:6.38px;line-height:7.66px;color:#acacac;font-weight:normal;transform:scaleX(0.8929);transform-origin:50% 50%;">Review Data</div>
<div style="left:281px;top:465px;width:47px;height:25px;background:#e1e5ea;border:1px solid #3d6c99;box-shadow:inset 0 0 0 0.5px #6d8fb0"></div>
<div class="t" style="left:281.0px;width:48px;text-align:center;top:474.67px;font-size:6.38px;line-height:7.66px;color:#1e1e1e;font-weight:normal;transform:scaleX(0.8929);transform-origin:50% 50%;">Collect REF</div>
<div style="left:350px;top:465px;width:75px;height:37px;background:#cccccc;"></div>
<div class="t" style="left:350.0px;width:75px;text-align:center;top:480.67px;font-size:6.38px;line-height:7.66px;color:#acacac;font-weight:normal;transform:scaleX(0.8929);transform-origin:50% 50%;">Start Data Collection</div>
<div style="left:429px;top:465px;width:75px;height:37px;background:#cccccc;"></div>
<div class="t" style="left:429.0px;width:75px;text-align:center;top:480.67px;font-size:6.38px;line-height:7.66px;color:#acacac;font-weight:normal;transform:scaleX(0.8929);transform-origin:50% 50%;">Pause Data Collection</div>
<div style="left:509px;top:465px;width:75px;height:37px;background:#cccccc;"></div>
<div class="t" style="left:509.0px;width:75px;text-align:center;top:480.67px;font-size:6.38px;line-height:7.66px;color:#acacac;font-weight:normal;transform:scaleX(0.8929);transform-origin:50% 50%;">Stop Data Collection</div>
<div style="left:39px;top:49px;width:145px;height:26px;border:1px solid #cdcdcd;border-left:none;"></div>
<div class="t" style="left:40px;top:49.26px;font-size:8.74px;line-height:10.48px;color:#2b3990;font-weight:bold;transform:scaleX(0.8929);transform-origin:0 50%;-webkit-text-stroke-width:0">Experim</div>
<div style="left:42px;top:63px;width:137px;height:8px;background:#ffffff;border:1px solid #b4b4b4;"></div>
<div class="t" style="left:44px;top:64.44px;font-size:5.94px;line-height:7.12px;color:#222;font-weight:normal;transform:scaleX(0.8929);transform-origin:0 50%;">TemperatureDemo</div>
<svg style="position:absolute;left:173px;top:66.0px" width="5" height="4"><path d="M0.5 0.8 L2.5 2.8 L4.5 0.8" fill="none" stroke="#3a3a3a" stroke-width="0.9"/></svg>
<div style="left:42px;top:63px;width:137px;height:8px;border:1px solid #b8b8b8;background:#fff"></div>
<div class="t" style="left:44px;top:64.44px;font-size:5.94px;line-height:7.12px;color:#222;font-weight:normal;transform:scaleX(0.8929);transform-origin:0 50%;">TemperatureDemo</div>
<div style="left:39px;top:80px;width:145px;height:80px;border:1px solid #cdcdcd;border-left:none;"></div>
<div class="t" style="left:40px;top:79.26px;font-size:8.74px;line-height:10.48px;color:#2b3990;font-weight:bold;transform:scaleX(0.8929);transform-origin:0 50%;-webkit-text-stroke-width:0">Data to Collect</div>
<div class="t" style="left:42.5px;top:92.76px;font-size:7.39px;line-height:8.87px;color:#222;font-weight:normal;transform:scaleX(0.8929);transform-origin:0 50%;">Type of Data</div>
<div style="left:85px;top:92px;width:93px;height:8px;background:#fdfdfd;border:1px solid #b4b4b4;"></div>
<div class="t" style="left:87px;top:93.51px;font-size:5.82px;line-height:6.99px;color:#222;font-weight:normal;transform:scaleX(0.8929);transform-origin:0 50%;">Spectral-Range</div>
<svg style="position:absolute;left:172px;top:95.0px" width="5" height="4"><path d="M0.5 0.8 L2.5 2.8 L4.5 0.8" fill="none" stroke="#3a3a3a" stroke-width="0.9"/></svg>
<div class="t" style="left:42px;top:106.06px;font-size:7.39px;line-height:8.87px;color:#222;font-weight:normal;transform:scaleX(0.8929);transform-origin:0 50%;">Reduction Method</div>
<div style="left:100px;top:105px;width:78px;height:8px;background:#fdfdfd;border:1px solid #b4b4b4;"></div>
<div class="t" style="left:102px;top:106.51px;font-size:5.82px;line-height:6.99px;color:#222;font-weight:normal;transform:scaleX(0.8929);transform-origin:0 50%;">Absorbance</div>
<svg style="position:absolute;left:172px;top:108.0px" width="5" height="4"><path d="M0.5 0.8 L2.5 2.8 L4.5 0.8" fill="none" stroke="#3a3a3a" stroke-width="0.9"/></svg>
<div class="t" style="left:42px;top:119.76px;font-size:7.39px;line-height:8.87px;color:#222;font-weight:normal;transform:scaleX(0.8929);transform-origin:0 50%;">IntTime</div>
<div style="left:85px;top:119px;width:36px;height:8px;background:#fff;border:1px solid #c4c4c4;"></div>
<div class="t" style="left:87px;top:120.24px;font-size:6.27px;line-height:7.53px;color:#222;font-weight:normal;transform:scaleX(0.8929);transform-origin:0 50%;">1.0</div>
<div style="left:115px;top:120px;width:6px;height:7px;background:#ececec;border:0.5px solid #cfcfcf"></div>
<svg style="position:absolute;left:115px;top:119px" width="7" height="10"><path d="M1.3 4.3 L3.5 1.7999999999999998 L5.7 4.3Z M1.3 5.7 L3.5 8.2 L5.7 5.7Z" fill="#555"/></svg>
<div style="left:127px;top:119px;width:51px;height:8px;background:#fdfdfd;border:1px solid #b4b4b4;"></div>
<div class="t" style="left:129px;top:120.51px;font-size:5.82px;line-height:6.99px;color:#222;font-weight:normal;transform:scaleX(0.8929);transform-origin:0 50%;">SECONDS</div>
<svg style="position:absolute;left:172px;top:122.0px" width="5" height="4"><path d="M0.5 0.8 L2.5 2.8 L4.5 0.8" fill="none" stroke="#3a3a3a" stroke-width="0.9"/></svg>
<div class="t" style="left:42px;top:133.86px;font-size:7.39px;line-height:8.87px;color:#222;font-weight:normal;transform:scaleX(0.8929);transform-origin:0 50%;">Number of Collections</div>
<div style="left:154px;top:132px;width:24px;height:8px;background:#fff;border:1px solid #c4c4c4;"></div>
<div class="t" style="left:156px;top:133.24px;font-size:6.27px;line-height:7.53px;color:#222;font-weight:normal;transform:scaleX(0.8929);transform-origin:0 50%;">2</div>
<div style="left:172px;top:133px;width:6px;height:7px;background:#ececec;border:0.5px solid #cfcfcf"></div>
<svg style="position:absolute;left:172px;top:132px" width="7" height="10"><path d="M1.3 4.3 L3.5 1.7999999999999998 L5.7 4.3Z M1.3 5.7 L3.5 8.2 L5.7 5.7Z" fill="#555"/></svg>
<div style="left:42px;top:148.8px;width:5px;height:5px;border:1px solid #8a8a8a;background:#fff;"></div>
<div class="t" style="left:51.7px;top:149.54px;font-size:5.94px;line-height:7.12px;color:#3a3a3a;font-weight:normal;transform:scaleX(0.8929);transform-origin:0 50%;">Enable Text output</div>
<div class="t" style="left:102.3px;top:149.61px;font-size:5.82px;line-height:6.99px;color:#3a3a3a;font-weight:normal;transform:scaleX(0.8929);transform-origin:0 50%;">( * suspends 'Save-Data' prompt )</div>
<div style="left:39px;top:165px;width:145px;height:66px;border:1px solid #cdcdcd;border-left:none;"></div>
<div class="t" style="left:40px;top:165.46px;font-size:8.74px;line-height:10.48px;color:#2b3990;font-weight:bold;transform:scaleX(0.8929);transform-origin:0 50%;-webkit-text-stroke-width:0">Spectral-Range Options</div>
<div class="t" style="left:96.0px;width:30px;text-align:center;top:177.97px;font-size:7.06px;line-height:8.47px;color:#222;font-weight:normal;transform:scaleX(0.8929);transform-origin:50% 50%;">Min</div>
<div class="t" style="left:142.0px;width:30px;text-align:center;top:177.97px;font-size:7.06px;line-height:8.47px;color:#222;font-weight:normal;transform:scaleX(0.8929);transform-origin:50% 50%;">Max</div>
<div class="t" style="left:42.2px;top:187.53px;font-size:6.94px;line-height:8.33px;color:#222;font-weight:normal;transform:scaleX(0.8929);transform-origin:0 50%;">WL (nm) (X-Axis)</div>
<div style="left:93px;top:187px;width:41px;height:9px;background:#fdfdfd;border:1px solid #b4b4b4;"></div>
<div class="t" style="left:95px;top:188.74px;font-size:6.27px;line-height:7.53px;color:#222;font-weight:normal;transform:scaleX(0.8929);transform-origin:0 50%;">150</div>
<svg style="position:absolute;left:128px;top:190.5px" width="5" height="4"><path d="M0.5 0.8 L2.5 2.8 L4.5 0.8" fill="none" stroke="#3a3a3a" stroke-width="0.9"/></svg>
<div style="left:138px;top:187px;width:40px;height:9px;background:#fdfdfd;border:1px solid #b4b4b4;"></div>
<div class="t" style="left:140px;top:188.74px;font-size:6.27px;line-height:7.53px;color:#222;font-weight:normal;transform:scaleX(0.8929);transform-origin:0 50%;">1100</div>
<svg style="position:absolute;left:172px;top:190.5px" width="5" height="4"><path d="M0.5 0.8 L2.5 2.8 L4.5 0.8" fill="none" stroke="#3a3a3a" stroke-width="0.9"/></svg>
<div style="left:51px;top:208px;width:5px;height:5px;border:1px solid #8a8a8a;background:#fff;"></div>
<div class="t" style="left:60.8px;top:208.01px;font-size:5.82px;line-height:6.99px;color:#222;font-weight:normal;transform:scaleX(0.8929);transform-origin:0 50%;">Digital-Filter</div>
<div class="t" style="left:109px;top:207.01px;font-size:5.82px;line-height:6.99px;color:#222;font-weight:normal;transform:scaleX(0.8929);transform-origin:0 50%;">Filter Size (#Pts)</div>
<div style="left:151px;top:206px;width:27px;height:8px;background:#fff;border:1px solid #c4c4c4;"></div>
<div class="t" style="left:153px;top:207.24px;font-size:6.27px;line-height:7.53px;color:#222;font-weight:normal;transform:scaleX(0.8929);transform-origin:0 50%;">19</div>
<div style="left:172px;top:207px;width:6px;height:7px;background:#ececec;border:0.5px solid #cfcfcf"></div>
<svg style="position:absolute;left:172px;top:206px" width="7" height="10"><path d="M1.3 4.3 L3.5 1.7999999999999998 L5.7 4.3Z M1.3 5.7 L3.5 8.2 L5.7 5.7Z" fill="#555"/></svg>
<div style="left:51px;top:219.5px;width:5px;height:5px;border:1px solid #8a8a8a;background:#fff;"></div>
<div class="t" style="left:60.8px;top:219.01px;font-size:5.82px;line-height:6.99px;color:#222;font-weight:normal;transform:scaleX(0.8929);transform-origin:0 50%;">Interpolation</div>
<div class="t" style="left:116px;top:219.01px;font-size:5.82px;line-height:6.99px;color:#222;font-weight:normal;transform:scaleX(0.8929);transform-origin:0 50%;">nm-per-point</div>
<div style="left:151px;top:218px;width:27px;height:8px;background:#fff;border:1px solid #c4c4c4;"></div>
<div class="t" style="left:153px;top:219.24px;font-size:6.27px;line-height:7.53px;color:#222;font-weight:normal;transform:scaleX(0.8929);transform-origin:0 50%;">2.00</div>
<div style="left:172px;top:219px;width:6px;height:7px;background:#ececec;border:0.5px solid #cfcfcf"></div>
<svg style="position:absolute;left:172px;top:218px" width="7" height="10"><path d="M1.3 4.3 L3.5 1.7999999999999998 L5.7 4.3Z M1.3 5.7 L3.5 8.2 L5.7 5.7Z" fill="#555"/></svg>
<div style="left:39px;top:236px;width:145px;height:130px;border:1px solid #cdcdcd;border-left:none;"></div>
<div class="t" style="left:40px;top:237.76px;font-size:8.74px;line-height:10.48px;color:#2b3990;font-weight:bold;transform:scaleX(0.8929);transform-origin:0 50%;-webkit-text-stroke-width:0">Repetition (FxnOf) Options</div>
<div class="t" style="left:42.2px;top:248.70px;font-size:7.17px;line-height:8.60px;color:#222;font-weight:normal;transform:scaleX(0.8929);transform-origin:0 50%;">Collect as a function of</div>
<div style="left:112px;top:249px;width:68px;height:8px;background:#fdfdfd;border:1px solid #7aa7d8;"></div>
<div style="left:113.5px;top:250px;width:42px;height:7px;background:#4790dc;"></div>
<div class="t" style="left:114px;top:249.74px;font-size:6.27px;line-height:7.53px;color:#fff;font-weight:normal;transform:scaleX(0.8929);transform-origin:0 50%;">TEMPERATURE</div>
<svg style="position:absolute;left:174px;top:251.5px" width="5" height="4"><path d="M0.5 0.8 L2.5 2.8 L4.5 0.8" fill="none" stroke="#3a3a3a" stroke-width="0.9"/></svg>
<div style="left:43px;top:262px;width:137px;height:94px;border:1px solid #cdcdcd;"></div>
<div class="t" style="left:45.7px;top:262.63px;font-size:7.28px;line-height:8.74px;color:#222;font-weight:normal;transform:scaleX(0.8929);transform-origin:0 50%;">FxnOf-Temperature Options</div>
<div style="left:46.3px;top:278px;width:5px;height:5px;border:1px solid #444;border-radius:50%;background:#fff;"></div>
<div style="left:47.8px;top:279.5px;width:3px;height:3px;border-radius:50%;background:#222;"></div>
<div class="t" style="left:55.3px;top:277.16px;font-size:7.39px;line-height:8.87px;color:#222;font-weight:normal;transform:scaleX(0.8929);transform-origin:0 50%;">Linear</div>
<div class="t" style="left:94.7px;top:277.63px;font-size:6.94px;line-height:8.33px;color:#222;font-weight:normal;transform:scaleX(0.8929);transform-origin:0 50%;">Increment (°C)</div>
<div style="left:142px;top:276px;width:30px;height:9px;background:#fff;border:1px solid #c4c4c4;"></div>
<div class="t" style="left:144px;top:277.74px;font-size:6.27px;line-height:7.53px;color:#222;font-weight:normal;transform:scaleX(0.8929);transform-origin:0 50%;">10.0</div>
<div style="left:166px;top:277px;width:6px;height:8px;background:#ececec;border:0.5px solid #cfcfcf"></div>
<svg style="position:absolute;left:166px;top:276px" width="7" height="11"><path d="M1.3 4.8 L3.5 2.3 L5.7 4.8Z M1.3 6.2 L3.5 8.7 L5.7 6.2Z" fill="#555"/></svg>
<div class="t" style="left:94.7px;top:291.87px;font-size:7.22px;line-height:8.67px;color:#222;font-weight:normal;transform:scaleX(0.8929);transform-origin:0 50%;">Incubation (secs)</div>
<div style="left:150px;top:290px;width:22px;height:8px;background:#fff;border:1px solid #c4c4c4;"></div>
<div class="t" style="left:152px;top:291.24px;font-size:6.27px;line-height:7.53px;color:#222;font-weight:normal;transform:scaleX(0.8929);transform-origin:0 50%;">10</div>
<div style="left:166px;top:291px;width:6px;height:7px;background:#ececec;border:0.5px solid #cfcfcf"></div>
<svg style="position:absolute;left:166px;top:290px" width="7" height="10"><path d="M1.3 4.3 L3.5 1.7999999999999998 L5.7 4.3Z M1.3 5.7 L3.5 8.2 L5.7 5.7Z" fill="#555"/></svg>
<div style="left:46.3px;top:304.5px;width:5px;height:5px;border:1px solid #444;border-radius:50%;background:#fff;"></div>
<div class="t" style="left:55.3px;top:303.00px;font-size:7.50px;line-height:9.00px;color:#222;font-weight:normal;transform:scaleX(0.8929);transform-origin:0 50%;">Non-Linear (Format: "Temp IncSecs")</div>
<div style="left:53.5px;top:315px;width:93px;height:21px;background:#ececec;border:1px solid #cfcfcf;"></div>
<svg style="position:absolute;left:141px;top:317px" width="5" height="19"><path d="M1 3.5 L2.5 2 L4 3.5 M1 15.5 L2.5 17 L4 15.5" fill="none" stroke="#a0a0a0" stroke-width="0.7"/></svg>
<div style="left:152px;top:316px;width:26px;height:19px;background:#dcdcdc;border:1px solid #bdbdbd;"></div>
<div class="t" style="left:152.0px;width:26px;text-align:center;top:322.74px;font-size:6.27px;line-height:7.53px;color:#222;font-weight:normal;transform:scaleX(0.8929);transform-origin:50% 50%;">Edit</div>
<div style="left:45.5px;top:343.8px;width:5px;height:5px;border:1px solid #8a8a8a;background:#fff;"></div>
<svg style="position:absolute;left:45.5px;top:343.8px" width="7" height="7"><path d="M1.5 3.5 L3 5 L5.5 1.8" fill="none" stroke="#333" stroke-width="0.9"/></svg>
<div class="t" style="left:55.3px;top:344.44px;font-size:5.94px;line-height:7.12px;color:#222;font-weight:normal;transform:scaleX(0.8929);transform-origin:0 50%;">Go to Safe Temp after DC</div>
<div style="left:142px;top:342px;width:30px;height:9px;background:#fff;border:1px solid #c4c4c4;"></div>
<div class="t" style="left:144px;top:343.74px;font-size:6.27px;line-height:7.53px;color:#222;font-weight:normal;transform:scaleX(0.8929);transform-origin:0 50%;">23.0</div>
<div style="left:166px;top:343px;width:6px;height:8px;background:#ececec;border:0.5px solid #cfcfcf"></div>
<svg style="position:absolute;left:166px;top:342px" width="7" height="11"><path d="M1.3 4.8 L3.5 2.3 L5.7 4.8Z M1.3 6.2 L3.5 8.7 L5.7 6.2Z" fill="#555"/></svg>
<svg style="position:absolute;left:38px;top:358px" width="6" height="9"><path d="M0 1 H3.2 Q4.2 1 4.2 2.2 V3.6 Q4.2 4.5 3 4.5 Q4.4 4.5 4.4 5.6 V7 Q4.4 8 3.2 8 H0" fill="none" stroke="#555" stroke-width="0.9"/></svg>
<div class="t" style="left:45.7px;top:359.74px;font-size:5.94px;line-height:7.12px;color:#222;font-weight:normal;transform:scaleX(0.8929);transform-origin:0 50%;">Close Shutter Between Scans</div>
<div style="left:39px;top:371px;width:145px;height:65px;border:1px solid #cdcdcd;border-left:none;"></div>
<div class="t" style="left:40px;top:372.76px;font-size:8.74px;line-height:10.48px;color:#2b3990;font-weight:bold;transform:scaleX(0.8929);transform-origin:0 50%;-webkit-text-stroke-width:0">Temperature Controller</div>
<div class="t" style="left:42.2px;top:390.63px;font-size:7.28px;line-height:8.74px;color:#505050;font-weight:normal;transform:scaleX(0.8929);transform-origin:0 50%;">Current Temp (°C)</div>
<div style="left:138px;top:389px;width:40px;height:8px;background:#f0f0f0;border:1px solid #dadada;"></div>
<div class="t" style="left:140px;top:390.44px;font-size:5.94px;line-height:7.12px;color:#bbb;font-weight:normal;transform:scaleX(0.8929);transform-origin:0 50%;">0</div>
<div class="t" style="left:42.2px;top:403.23px;font-size:7.28px;line-height:8.74px;color:#222;font-weight:normal;transform:scaleX(0.8929);transform-origin:0 50%;">Target-Temp (°C)</div>
<div style="left:138px;top:402px;width:40px;height:9px;background:#fff;border:1px solid #c4c4c4;"></div>
<div class="t" style="left:140px;top:403.74px;font-size:6.27px;line-height:7.53px;color:#222;font-weight:normal;transform:scaleX(0.8929);transform-origin:0 50%;">0.0</div>
<div style="left:172px;top:403px;width:6px;height:8px;background:#ececec;border:0.5px solid #cfcfcf"></div>
<svg style="position:absolute;left:172px;top:402px" width="7" height="11"><path d="M1.3 4.8 L3.5 2.3 L5.7 4.8Z M1.3 6.2 L3.5 8.7 L5.7 6.2Z" fill="#555"/></svg>
<div style="left:40px;top:418px;width:138px;height:13px;background:#c9c9c9;border:1px solid #5a5a5a;"></div>
<div class="t" style="left:40.0px;width:140px;text-align:center;top:420.92px;font-size:9.30px;line-height:11.16px;color:#1a1a1a;font-weight:bold;transform:scaleX(0.8929);transform-origin:50% 50%;">Temp Control-Panel</div>
<div style="left:39px;top:441px;width:145px;height:55px;border:1px solid #cdcdcd;border-left:none;"></div>
<div class="t" style="left:40px;top:442.36px;font-size:8.74px;line-height:10.48px;color:#2b3990;font-weight:bold;transform:scaleX(0.8929);transform-origin:0 50%;-webkit-text-stroke-width:0">Sample Changer</div>
<div class="t" style="left:42.2px;top:461.24px;font-size:5.60px;line-height:6.72px;color:#222;font-weight:normal;transform:scaleX(0.8929);transform-origin:0 50%;">Sample  Cell</div>
<div class="t" style="left:92.3px;top:461.11px;font-size:5.82px;line-height:6.99px;color:#222;font-weight:normal;transform:scaleX(0.8929);transform-origin:0 50%;">Reference Cell</div>
<div class="t" style="left:141.7px;top:460.94px;font-size:5.60px;line-height:6.72px;color:#222;font-weight:normal;transform:scaleX(0.8929);transform-origin:0 50%;">Samples to Cycle</div>
<div style="left:42px;top:468.5px;width:36px;height:8px;background:#fff;border:1px solid #c4c4c4;"></div>
<div class="t" style="left:44px;top:469.74px;font-size:6.27px;line-height:7.53px;color:#222;font-weight:normal;transform:scaleX(0.8929);transform-origin:0 50%;">1</div>
<div style="left:72px;top:469.5px;width:6px;height:7px;background:#ececec;border:0.5px solid #cfcfcf"></div>
<svg style="position:absolute;left:72px;top:468.5px" width="7" height="10"><path d="M1.3 4.3 L3.5 1.7999999999999998 L5.7 4.3Z M1.3 5.7 L3.5 8.2 L5.7 5.7Z" fill="#555"/></svg>
<div style="left:92px;top:468.5px;width:36px;height:8px;background:#fff;border:1px solid #c4c4c4;"></div>
<div class="t" style="left:94px;top:469.74px;font-size:6.27px;line-height:7.53px;color:#222;font-weight:normal;transform:scaleX(0.8929);transform-origin:0 50%;">1</div>
<div style="left:122px;top:469.5px;width:6px;height:7px;background:#ececec;border:0.5px solid #cfcfcf"></div>
<svg style="position:absolute;left:122px;top:468.5px" width="7" height="10"><path d="M1.3 4.3 L3.5 1.7999999999999998 L5.7 4.3Z M1.3 5.7 L3.5 8.2 L5.7 5.7Z" fill="#555"/></svg>
<div style="left:141px;top:468.5px;width:35px;height:8px;background:#fff;border:1px solid #c4c4c4;"></div>
<div class="t" style="left:143px;top:469.74px;font-size:6.27px;line-height:7.53px;color:#222;font-weight:normal;transform:scaleX(0.8929);transform-origin:0 50%;">3</div>
<div style="left:170px;top:469.5px;width:6px;height:7px;background:#ececec;border:0.5px solid #cfcfcf"></div>
<svg style="position:absolute;left:170px;top:468.5px" width="7" height="10"><path d="M1.3 4.3 L3.5 1.7999999999999998 L5.7 4.3Z M1.3 5.7 L3.5 8.2 L5.7 5.7Z" fill="#555"/></svg>
<svg style="position:absolute;left:43px;top:485px" width="7" height="7"><path d="M1 3.5 L3 5.5 L6 1.5" fill="none" stroke="#d0d0d0" stroke-width="0.9"/></svg>
<div class="t" style="left:52.9px;top:487.01px;font-size:5.82px;line-height:6.99px;color:#c4c4c4;font-weight:normal;transform:scaleX(0.8929);transform-origin:0 50%;">Skip Reference Cell when Cycling Multiple Samples</div>
<div style="left:39px;top:498px;width:156px;height:2px;background:#dedede"></div>
<div style="left:66px;top:51px;width:123.5px;height:9.5px;background:#fdfdf8;border:1px solid #111;"></div>
<div class="t" style="left:67.8px;top:53.04px;font-size:7.10px;line-height:8.52px;color:#141414;font-weight:normal;transform:scaleX(1.0000);transform-origin:0 50%;letter-spacing:-0.26px;-webkit-text-stroke-width:0.1px">OLISWorks thermal screen capture 1..PG</div>
</div></body></html>
